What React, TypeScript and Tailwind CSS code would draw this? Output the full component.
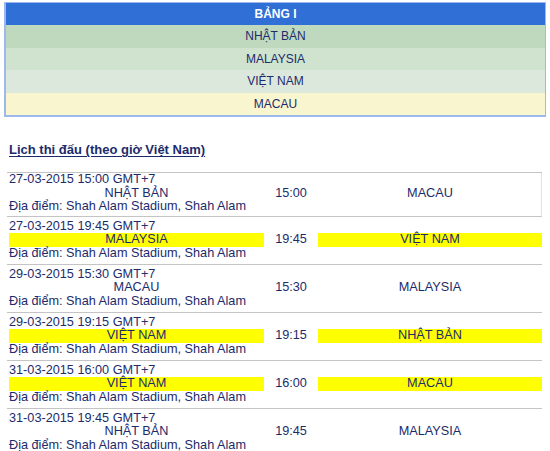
const groupTeams = [
  { name: "NHẬT BẢN", bg: "bg-[#bfd9bf]" },
  { name: "MALAYSIA", bg: "bg-[#cfe3cf]" },
  { name: "VIỆT NAM", bg: "bg-[#dde8dd]" },
  { name: "MACAU", bg: "bg-[#f8f5cf]" },
];

type Match = {
  date: string;
  home: string;
  time: string;
  away: string;
  highlight?: boolean;
};

const matches: Match[] = [
  { date: "27-03-2015 15:00 GMT+7", home: "NHẬT BẢN", time: "15:00", away: "MACAU" },
  { date: "27-03-2015 19:45 GMT+7", home: "MALAYSIA", time: "19:45", away: "VIỆT NAM", highlight: true },
  { date: "29-03-2015 15:30 GMT+7", home: "MACAU", time: "15:30", away: "MALAYSIA" },
  { date: "29-03-2015 19:15 GMT+7", home: "VIỆT NAM", time: "19:15", away: "NHẬT BẢN", highlight: true },
  { date: "31-03-2015 16:00 GMT+7", home: "VIỆT NAM", time: "16:00", away: "MACAU", highlight: true },
  { date: "31-03-2015 19:45 GMT+7", home: "NHẬT BẢN", time: "19:45", away: "MALAYSIA" },
];

const MatchRow = ({ m, first }: { m: Match; first: boolean }) => (
  <div
    className={
      first
        ? "pl-[2px] pb-[2px] border-b border-r border-[#c4c4c4] border-r-[#e2e2e2]"
        : "pl-[2px] pt-[3px] pb-[3.5px] border-b border-[#c4c4c4]"
    }
  >
    <div>{m.date}</div>
    <div className="grid grid-cols-[255px_54px_224px]">
      <div className={m.highlight ? "text-center bg-[#ffff00]" : "text-center"}>{m.home}</div>
      <div className="text-center">{m.time}</div>
      <div className={m.highlight ? "text-center bg-[#ffff00]" : "text-center"}>{m.away}</div>
    </div>
    <div>Địa điểm: Shah Alam Stadium, Shah Alam</div>
  </div>
);

export default function App() {
  return (
    <div className="w-[550px] h-[451px] overflow-hidden bg-white font-['Liberation_Sans',Arial,sans-serif] text-[#1c2b6b]">
      <div className="pt-[2px] pl-[4px]">
        <div className="w-[542px] border border-[#9cb9ec] border-b-2 border-l-2">
          <div className="h-[22px] flex items-center justify-center bg-[#2f6fd6] text-white font-bold text-[12px]">
            BẢNG I
          </div>
          {groupTeams.map((t) => (
            <div key={t.name} className={`h-[22.5px] flex items-center justify-center text-[12px] ${t.bg}`}>
              {t.name}
            </div>
          ))}
        </div>
      </div>

      <div className="mt-[26px] pl-[9px] text-[13px] leading-[14px] font-bold underline underline-offset-2">
        Lịch thi đấu (theo giờ Việt Nam)
      </div>

      <div className="mt-[15px] ml-[7px] w-[535px] border-t border-[#c4c4c4] text-[12.7px] leading-[13.5px]">
        {matches.map((m, i) => (
          <MatchRow key={m.date} m={m} first={i === 0} />
        ))}
      </div>
    </div>
  );
}
